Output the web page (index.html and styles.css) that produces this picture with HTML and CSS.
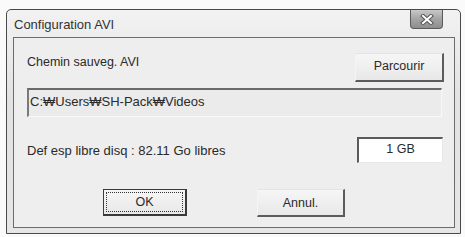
FILE: index.html
```html
<!DOCTYPE html>
<html lang="fr">
<head>
  <meta charset="UTF-8">
  <title>Configuration AVI</title>
  <link rel="stylesheet" href="styles.css">
</head>
<body>
  <div class="window">
    <div class="titlebar">
      <span class="title">Configuration AVI</span>
      <div class="close">
        <svg width="14" height="11" viewBox="0 0 14 11">
          <path d="M3 2 L11 9 M11 2 L3 9" stroke="#555" stroke-width="4" stroke-linecap="square"/>
          <path d="M3 2 L11 9 M11 2 L3 9" stroke="#fff" stroke-width="2" stroke-linecap="square"/>
        </svg>
      </div>
    </div>
    <div class="client">
      <div class="row row-path-label">
        <span class="label">Chemin sauveg. AVI</span>
        <button class="btn btn-browse">Parcourir</button>
      </div>
      <div class="path-box">C:₩Users₩SH-Pack₩Videos</div>
      <div class="row row-space">
        <span class="label">Def esp libre disq : 82.11 Go libres</span>
        <div class="size-box">1 GB</div>
      </div>
      <div class="row-buttons">
        <button class="btn btn-default"><span class="focus">OK</span></button>
        <button class="btn btn-cancel">Annul.</button>
      </div>
    </div>
  </div>
</body>
</html>
```
FILE: styles.css
```css
html, body {
  margin: 0;
  padding: 0;
  background-color: #fafafa;
  font-family: "Liberation Sans", "Noto Sans CJK KR", sans-serif;
  font-size: 12px;
  color: #2a2a2a;
}

.window {
  box-sizing: border-box;
  margin: 9px 0 0 6px;
  width: 455px;
  height: 225px;
  border: 1px solid #4a4a4a;
  border-radius: 5px 5px 0 0;
  background: linear-gradient(to bottom, #f2f2f2 0%, #e2e2e2 40%, #e6e6e6 100%);
  padding: 0 5px 5px 6px;
  display: flex;
  flex-direction: column;
}

.titlebar {
  height: 27px;
  display: flex;
  justify-content: space-between;
  align-items: flex-start;
}

.title {
  font-size: 13px;
  color: #333;
  padding: 7px 0 0 1px;
}

.close {
  box-sizing: border-box;
  width: 33px;
  height: 19px;
  margin-right: 12px;
  border: 1px solid #5a5a5a;
  border-top: none;
  border-radius: 0 0 4px 4px;
  background: linear-gradient(to bottom, #c8c8c8 0%, #a4a4a4 50%, #8e8e8e 100%);
  display: flex;
  align-items: center;
  justify-content: center;
}

.client {
  flex: 1;
  box-sizing: border-box;
  border: 1px solid #6c6c6c;
  background: #eeeeee;
  padding: 15px 10px 0 12px;
  display: flex;
  flex-direction: column;
}

.row {
  display: flex;
  justify-content: space-between;
}

.row-path-label {
  height: 29px;
}

.row-path-label .label {
  padding: 2px 0 0 1px;
  font-size: 12.5px;
}

.btn {
  box-sizing: border-box;
  font-family: inherit;
  font-size: 12.5px;
  color: #2a2a2a;
  background: linear-gradient(to bottom, #f6f6f6, #e8e8e8);
  border-style: solid;
  border-width: 1px 2px 2px 1px;
  border-color: #e4e4e4 #5c5c5c #5c5c5c #f4f4f4;
  padding: 0;
  margin: 0;
}

.btn-browse {
  width: 89px;
  height: 29px;
  padding-bottom: 2px;
}

.path-box {
  box-sizing: border-box;
  height: 29px;
  margin: 6px 2px 0 1px;
  border-style: solid;
  border-width: 2px 1px 1px 2px;
  border-color: #6a6a6a #f8f8f8 #f8f8f8 #7a7a7a;
  background: #ebebeb;
  padding: 4px 0 0 1px;
  font-size: 13px;
}

.row-space {
  margin-top: 20px;
  align-items: center;
  height: 26px;
}

.row-space .label {
  margin-left: 1px;
  font-size: 13px;
}

.size-box {
  box-sizing: border-box;
  width: 86px;
  height: 26px;
  margin-right: 1px;
  border-style: solid;
  border-width: 2px 1px 1px 2px;
  border-color: #5a5a5a #e8e8e8 #e8e8e8 #5a5a5a;
  background: #fff;
  text-align: center;
  line-height: 20px;
  font-size: 12.5px;
}

.row-buttons {
  display: flex;
  margin-top: 26px;
  padding-left: 77px;
  gap: 70px;
}

.btn-default {
  width: 84px;
  height: 27px;
  border: 1px solid #3a3a3a;
  border-right-width: 2px;
  border-bottom-width: 2px;
  padding: 2px;
}

.btn-default .focus {
  display: block;
  height: 100%;
  box-sizing: border-box;
  border: 1px dotted #333;
  line-height: 19px;
}

.btn-cancel {
  width: 88px;
  height: 28px;
}
```
